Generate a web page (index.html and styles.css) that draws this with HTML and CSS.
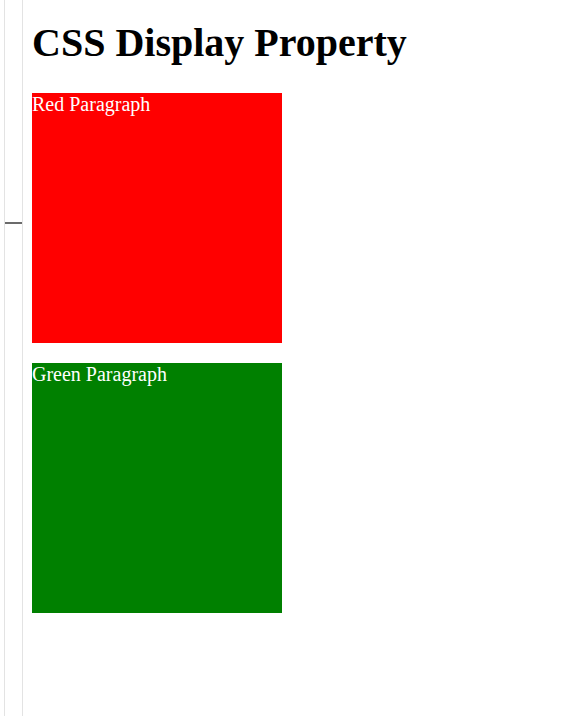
FILE: index.html
```html
<!DOCTYPE html>
<html>
<head>
<meta charset="utf-8">
<title>CSS Display Property</title>
<link rel="stylesheet" href="styles.css">
</head>
<body>
<div class="page">
  <aside class="rail"><span class="rail-dash"></span></aside>
  <main class="content">
    <h1 class="title">CSS Display Property</h1>
    <p class="box box-red">Red Paragraph</p>
    <p class="box box-green">Green Paragraph</p>
  </main>
</div>
</body>
</html>
```
FILE: styles.css
```css
html, body {
  margin: 0;
  padding: 0;
  background: #ffffff;
}
body {
  font-family: "Liberation Serif", "Times New Roman", serif;
}
.page {
  display: flex;
  min-height: 716px;
}
.rail {
  margin-left: 4px;
  width: 17px;
  border-left: 1px solid #e3e3e3;
  border-right: 1px solid #e3e3e3;
  display: flex;
  flex-direction: column;
  padding-top: 222px;
  box-sizing: content-box;
}
.rail-dash {
  display: block;
  height: 2px;
  background: #6b6b6b;
}
.content {
  margin-left: 9px;
  display: flex;
  flex-direction: column;
  align-items: flex-start;
}
.title {
  margin: 21px 0 28px;
  font-size: 40px;
  line-height: 44px;
  font-weight: bold;
  color: #000;
}
.box {
  margin: 0 0 20px;
  width: 250px;
  height: 250px;
  font-size: 20px;
  color: #ffffff;
}
.box-red { background: #ff0000; }
.box-green { background: #008000; }
```
